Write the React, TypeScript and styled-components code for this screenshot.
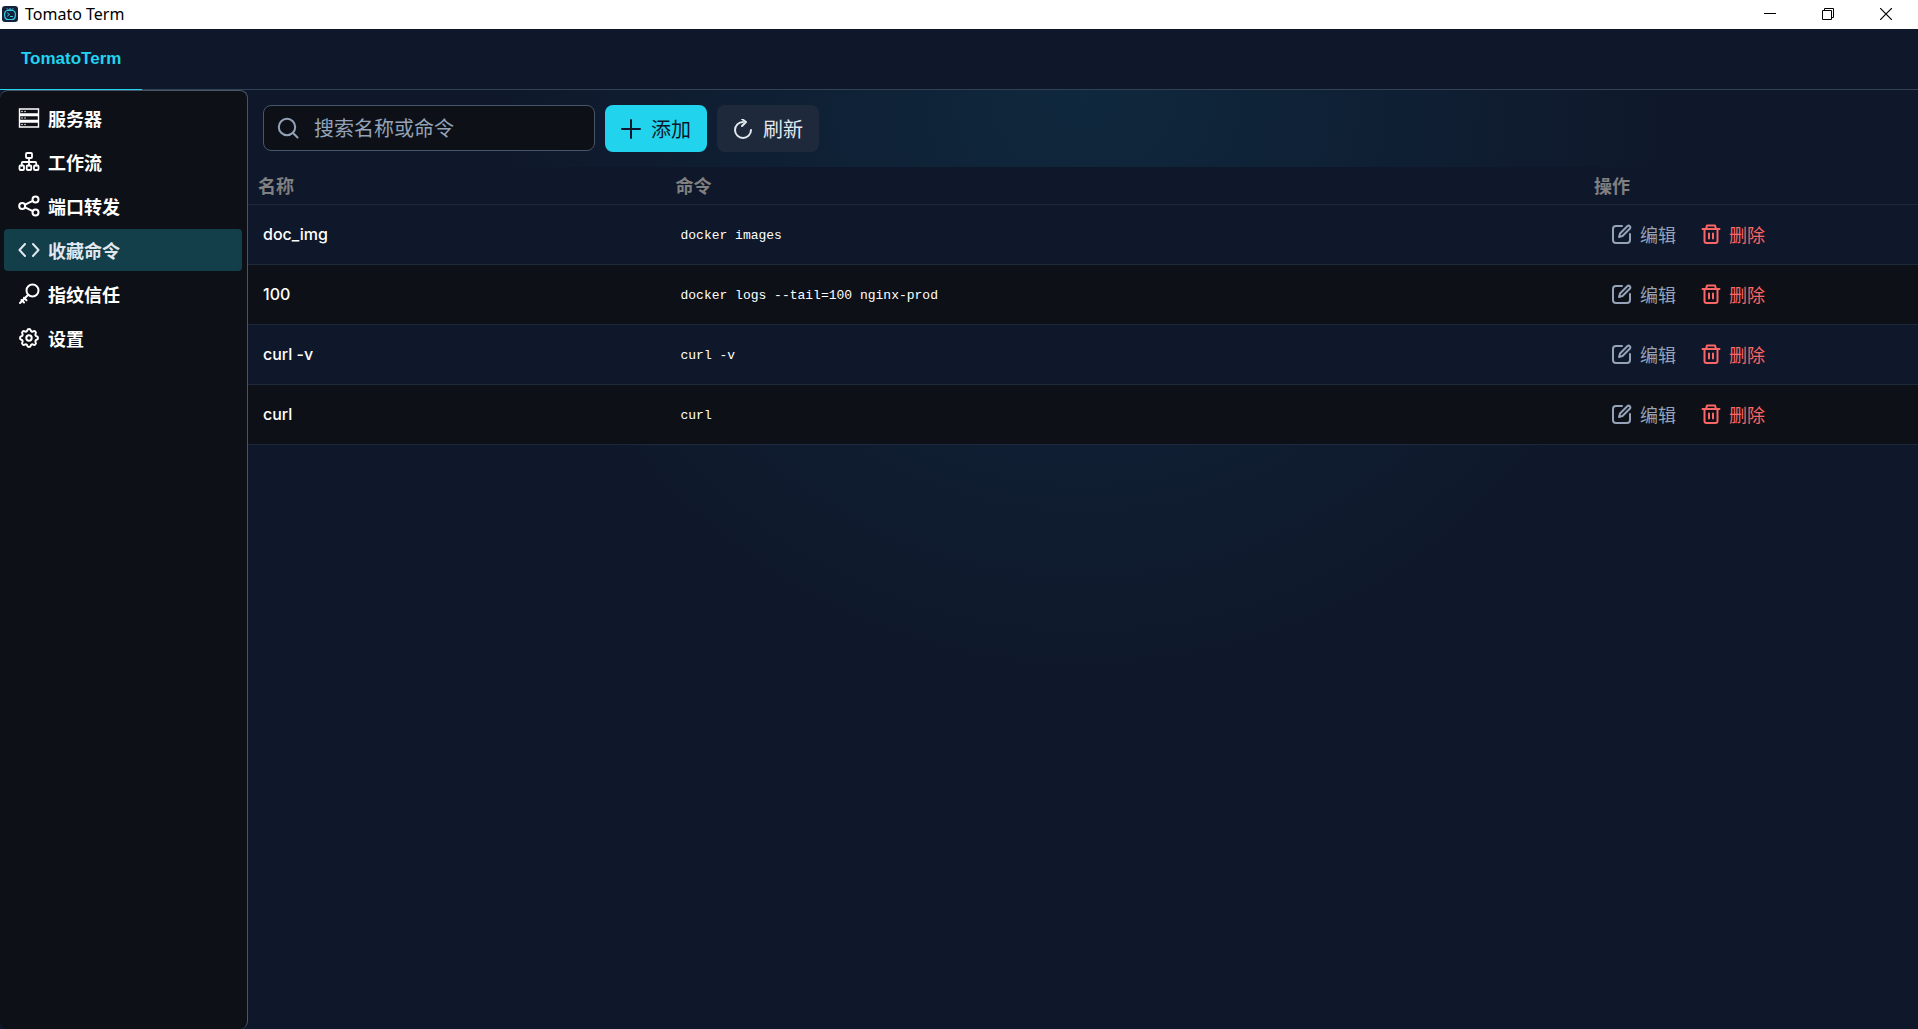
import React from "react";
import styled, { createGlobalStyle } from "styled-components";

const sans = `Inter, "Liberation Sans", "Noto Sans CJK SC", sans-serif`;
const cjk = `"Noto Sans CJK SC", sans-serif`;

const GlobalStyle = createGlobalStyle`
  *, *::before, *::after { box-sizing: border-box; }
  html, body, #root { height: 100%; }
  body { margin: 0; background: #0f172a; font-family: ${sans}; }
  button, input { font: inherit; }
`;

const Window = styled.div`
  display: flex;
  flex-direction: column;
  min-height: 100%;
`;

const TitleBar = styled.header`
  display: flex;
  align-items: center;
  height: 29px;
  padding: 0 3px 0 2px;
  border-bottom: 1px solid #fff;
  background: #fff;
  color: #000;
`;

const WindowTitle = styled.h1`
  flex: 1;
  margin: 0 0 0 7px;
  font: 400 16px/28px "Noto Sans", sans-serif;
`;

const WindowButton = styled.button`
  display: grid;
  place-items: center;
  width: 58px;
  height: 28px;
  padding: 0;
  border: 0;
  background: transparent;
  color: #000;
`;

const TabBar = styled.nav`
  display: flex;
  height: 61px;
  border-bottom: 1px solid #334155;
`;

const Tab = styled.a`
  width: 142px;
  height: 61px;
  padding-left: 21px;
  border-bottom: 1px solid #22d3ee;
  color: #22d3ee;
  font: 700 17px/60px "Liberation Sans", sans-serif;
  text-decoration: none;
`;

const Body = styled.div`
  display: flex;
  flex: 1;
`;

const Sidebar = styled.nav`
  display: flex;
  flex-direction: column;
  gap: 2px;
  width: 248px;
  padding: 6px 5px 6px 4px;
  border: solid #475569;
  border-width: 1px 1px 0 0;
  border-radius: 8px;
  background: #0d1117;
`;

const NavItem = styled.a<{ $active?: boolean }>`
  display: flex;
  align-items: center;
  gap: 8px;
  height: 42px;
  padding-left: 14px;
  border-radius: 4px;
  background: ${(p) => (p.$active ? "#123f4a" : "transparent")};
  color: ${(p) => (p.$active ? "#e2e8f0" : "#fff")};
  font: 700 18px/26px ${cjk};
  text-decoration: none;
`;

const Main = styled.main`
  flex: 1;
  min-width: 0;
  background: radial-gradient(circle 620px at 50% 0, #0f283d, #0f172a) #0f172a;
`;

const Toolbar = styled.form`
  display: flex;
  gap: 10px;
  height: 77px;
  padding: 15px;
`;

const SearchField = styled.label`
  display: flex;
  align-items: center;
  gap: 15px;
  width: 332px;
  height: 46px;
  padding: 0 13px;
  border: 1px solid #475569;
  border-radius: 8px;
  background: #0d1117;
  color: #94a3b8;
`;

const SearchInput = styled.input`
  flex: 1;
  min-width: 0;
  padding: 0;
  border: 0;
  outline: 0;
  background: transparent;
  color: #fff;
  font: 400 20px/28px ${cjk};
  &::placeholder { color: #94a3b8; opacity: 1; }
`;

const ToolButton = styled.button<{ $primary?: boolean }>`
  display: flex;
  align-items: center;
  justify-content: center;
  gap: 10px;
  width: 102px;
  height: 47px;
  padding: 0;
  border: 0;
  border-radius: 8px;
  background: ${(p) => (p.$primary ? "#22d3ee" : "#1e293b")};
  color: ${(p) => (p.$primary ? "#0f172a" : "#e2e8f0")};
  font: 400 20px/28px ${cjk};
`;

const Table = styled.table`
  width: 100%;
  table-layout: fixed;
  border-collapse: separate;
  border-spacing: 0;
`;

const HeadCell = styled.th<{ $width: string }>`
  width: ${(p) => p.$width};
  height: 38px;
  padding: 0 10px 2px;
  border-bottom: 1px solid #1e293b;
  background: #0f172a;
  color: #808080;
  font: 700 18px/26px ${cjk};
  text-align: left;
`;

const Cell = styled.td`
  height: 60px;
  padding: 0 15px 2px;
  border-bottom: 1px solid #1e293b;
  color: #fff;
  font: 500 16px/24px Inter, sans-serif;
  tr:nth-child(odd) > & { background: #0f172a; }
  tr:nth-child(even) > & { background: #0d1117; }
`;

const Code = styled.code`
  display: block;
  padding-top: 4px;
  font: 400 13px/24px "Liberation Mono", monospace;
`;

const Actions = styled.div`
  display: flex;
  gap: 25px;
  padding-left: 13px;
`;

const ActionButton = styled.button<{ $danger?: boolean }>`
  display: flex;
  align-items: center;
  gap: 8px;
  padding: 0;
  border: 0;
  background: transparent;
  color: ${(p) => (p.$danger ? "#fb6666" : "#94a3b8")};
  font: 400 18px/26px ${cjk};
`;

type IconProps = { size?: number; box?: number; width?: number; children: React.ReactNode };

const Icon = ({ size = 22, box = 22, width = 2, children }: IconProps) => (
  <svg width={size} height={size} viewBox={`0 0 ${box} ${box}`} fill="none" stroke="currentColor"
    strokeWidth={width} strokeLinecap="round" strokeLinejoin="round" aria-hidden="true">
    {children}
  </svg>
);

const AppLogo = () => (
  <svg width="16" height="16" viewBox="0 0 16 16" fill="none" stroke="#35cbe4" strokeLinecap="round" aria-hidden="true">
    <rect width="16" height="16" rx="3" fill="#14213a" stroke="none" />
    <path d="M5 2.500 6.500 4h3L11 2.500M8 4V2.500" />
    <path d="M5 4.500C1.500 5.500 1.800 13.500 6 13.500h4c4.200 0 4.500-8 1-9z" strokeWidth="1.200" />
    <path d="m5.500 7 2 1.500-2 1.500M8.500 10.500h2" />
  </svg>
);

const icons = {
  server: (
    <Icon width={1.4}>
      <path d="M1.500 2h19v5h-19zM1.500 8.500h19v5h-19zM1.500 15h19v5h-19z" strokeLinejoin="miter" />
      <path d="M4 4.500h.1M7 4.500h.1M4 11h.1M7 11h.1M4 17.500h.1M7 17.500h.1" />
    </Icon>
  ),
  flow: (
    <Icon width={1.8}>
      <rect x="8" y="2" width="6" height="5" rx="1" />
      <rect x="1.500" y="14.500" width="4.500" height="4.500" rx="1" />
      <rect x="8.750" y="14.500" width="4.500" height="4.500" rx="1" />
      <rect x="16" y="14.500" width="4.500" height="4.500" rx="1" />
      <path d="M11 7v7.500M3.750 14.500v-2.300q0-1.200 1.200-1.200h12.100q1.200 0 1.200 1.200v2.300" />
    </Icon>
  ),
  share: (
    <Icon>
      <circle cx="4.200" cy="11" r="3" />
      <circle cx="17.500" cy="4.500" r="3" />
      <circle cx="17.500" cy="17.500" r="3" />
      <path d="m7 9.700 7.800-3.900M7 12.300l7.800 3.900" />
    </Icon>
  ),
  code: (
    <Icon>
      <path d="M7 5 1.500 11 7 17M15 5l5.500 6L15 17" />
    </Icon>
  ),
  key: (
    <Icon>
      <circle cx="14.500" cy="7.500" r="6" />
      <path d="M10.200 11.800 2 20M3.500 17l2.500 2.500M6 14.800l2.500 2.500" />
    </Icon>
  ),
  gear: (
    <Icon>
      <g transform="translate(-1 -1)">
        <path d="M10.325 4.317c.426-1.756 2.924-1.756 3.350 0a1.724 1.724 0 0 0 2.573 1.066c1.543-.94 3.310.826 2.370 2.370a1.724 1.724 0 0 0 1.065 2.572c1.756.426 1.756 2.924 0 3.350a1.724 1.724 0 0 0-1.066 2.573c.94 1.543-.826 3.310-2.370 2.370a1.724 1.724 0 0 0-2.572 1.065c-.426 1.756-2.924 1.756-3.350 0a1.724 1.724 0 0 0-2.573-1.066c-1.543.94-3.310-.826-2.370-2.370a1.724 1.724 0 0 0-1.065-2.572c-1.756-.426-1.756-2.924 0-3.350a1.724 1.724 0 0 0 1.066-2.573c-.94-1.543.826-3.310 2.370-2.370 1 .608 2.296.070 2.572-1.065z" />
        <circle cx="12" cy="12" r="2.700" />
      </g>
    </Icon>
  ),
  search: (
    <Icon>
      <circle cx="10" cy="10" r="8.200" />
      <path d="m16 16 4.500 4.500" />
    </Icon>
  ),
  plus: (
    <Icon size={20} box={20}>
      <path d="M10 1v18M1 10h18" />
    </Icon>
  ),
  refresh: (
    <Icon size={20} box={20}>
      <path d="M10 3a8 8 0 1 0 8 8" />
      <path d="m9 0 4 3-4 4" />
    </Icon>
  ),
  edit: (
    <Icon size={20} box={20}>
      <path d="M10 2H4a3 3 0 0 0-3 3v11a3 3 0 0 0 3 3h11a3 3 0 0 0 3-3v-6" />
      <path d="M15.500 2 8 9.500 7 13l3.500-1L18 4.500a1.800 1.800 0 0 0-2.500-2.500z" />
    </Icon>
  ),
  trash: (
    <Icon size={20} box={20}>
      <path d="M1.500 5h17M5 5l1-3.500h8L15 5M3.500 5v12a2 2 0 0 0 2 2h9a2 2 0 0 0 2-2V5M8 9.500v5M12 9.500v5" />
    </Icon>
  ),
};

const navItems = [
  { label: "服务器", icon: icons.server },
  { label: "工作流", icon: icons.flow },
  { label: "端口转发", icon: icons.share },
  { label: "收藏命令", icon: icons.code, active: true },
  { label: "指纹信任", icon: icons.key },
  { label: "设置", icon: icons.gear },
];

const commands = [
  { name: "doc_img", command: "docker images" },
  { name: "100", command: "docker logs --tail=100 nginx-prod" },
  { name: "curl -v", command: "curl -v" },
  { name: "curl", command: "curl" },
];

export default function App() {
  return (
    <>
      <GlobalStyle />
      <Window>
        <TitleBar>
          <AppLogo />
          <WindowTitle>Tomato Term</WindowTitle>
          <WindowButton aria-label="最小化">
            <svg width="12" height="12" stroke="currentColor"><path d="M0 5.500h12" /></svg>
          </WindowButton>
          <WindowButton aria-label="还原">
            <svg width="12" height="12" fill="none" stroke="currentColor">
              <path d="M.5 2.500h9v9h-9zM2.500 2.500v-2h9v9h-2" />
            </svg>
          </WindowButton>
          <WindowButton aria-label="关闭">
            <svg width="12" height="12" stroke="currentColor" strokeWidth="1.200"><path d="m0 0 12 12M12 0 0 12" /></svg>
          </WindowButton>
        </TitleBar>
        <TabBar>
          <Tab href="#home">TomatoTerm</Tab>
        </TabBar>
        <Body>
          <Sidebar>
            {navItems.map((item) => (
              <NavItem key={item.label} href="#nav" $active={item.active}>
                {item.icon}
                {item.label}
              </NavItem>
            ))}
          </Sidebar>
          <Main>
            <Toolbar onSubmit={(e) => e.preventDefault()}>
              <SearchField>
                {icons.search}
                <SearchInput type="text" aria-label="搜索名称或命令" placeholder="搜索名称或命令" />
              </SearchField>
              <ToolButton type="button" $primary>{icons.plus}添加</ToolButton>
              <ToolButton type="button">{icons.refresh}刷新</ToolButton>
            </Toolbar>
            <Table>
              <thead>
                <tr>
                  <HeadCell $width="25%">名称</HeadCell>
                  <HeadCell $width="55%">命令</HeadCell>
                  <HeadCell $width="20%">操作</HeadCell>
                </tr>
              </thead>
              <tbody>
                {commands.map((row) => (
                  <tr key={row.name}>
                    <Cell>{row.name}</Cell>
                    <Cell><Code>{row.command}</Code></Cell>
                    <Cell>
                      <Actions>
                        <ActionButton type="button">{icons.edit}编辑</ActionButton>
                        <ActionButton type="button" $danger>{icons.trash}删除</ActionButton>
                      </Actions>
                    </Cell>
                  </tr>
                ))}
              </tbody>
            </Table>
          </Main>
        </Body>
      </Window>
    </>
  );
}
